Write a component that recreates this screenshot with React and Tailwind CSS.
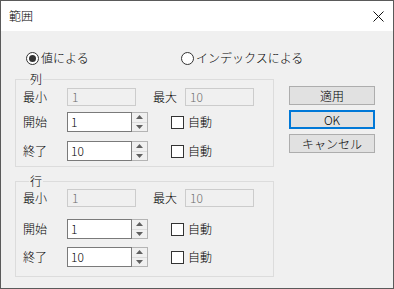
import React from 'react';

const font = { fontFamily: '"Noto Sans CJK JP", "Noto Sans", sans-serif' };

function Radio({ checked, label }) {
    return (
        <div className="flex items-center gap-[2px] whitespace-nowrap">
            <span className="shrink-0 w-[13px] h-[13px] rounded-full border border-[#333] bg-white flex items-center justify-center">
                {checked && <span className="w-[7px] h-[7px] rounded-full bg-[#333]" />}
            </span>
            <span className="text-[12px] leading-[14px] text-black">{label}</span>
        </div>
    );
}

function DisabledField({ value }) {
    return (
        <div className="w-[69px] h-[18px] border border-[#cccccc] bg-[#f0f0f0] px-[4px] flex items-center text-[12px] leading-[14px] text-[#6d6d6d]">
            {value}
        </div>
    );
}

function Spin({ value }) {
    return (
        <div className="flex w-[81px] h-[20px]">
            <div className="flex-1 border border-[#7a7a7a] bg-white px-[3px] flex items-center text-[12px] leading-[14px] text-black">{value}</div>
            <div className="w-[16px] border border-l-0 border-[#b4b4b4] bg-[#f0f0f0] flex flex-col">
                <div className="flex-1 flex items-center justify-center border-b border-[#dcdcdc]">
                    <svg width="7" height="4" viewBox="0 0 7 4"><path d="M3.5 0L7 4H0z" fill="#606060" /></svg>
                </div>
                <div className="flex-1 flex items-center justify-center">
                    <svg width="7" height="4" viewBox="0 0 7 4"><path d="M0 0h7L3.5 4z" fill="#606060" /></svg>
                </div>
            </div>
        </div>
    );
}

function Check({ label }) {
    return (
        <div className="flex items-center gap-[4px] whitespace-nowrap">
            <span className="shrink-0 w-[13px] h-[13px] border border-[#333] bg-white" />
            <span className="text-[12px] leading-[14px] text-black">{label}</span>
        </div>
    );
}

function Group({ title, rowGaps, padTop, padBottom }) {
    return (
        <fieldset className="border border-[#dcdcdc] px-[7px] min-w-0" style={{ paddingTop: padTop, paddingBottom: padBottom }}>
            <legend className="ml-[6px] px-[1px] text-[12px] leading-[14px] text-black">{title}</legend>
            <div className="flex items-center">
                <span className="w-[44px] text-[12px] leading-[14px]">最小</span>
                <DisabledField value="1" />
                <span className="ml-[17px] w-[32px] text-[12px] leading-[14px]">最大</span>
                <DisabledField value="10" />
            </div>
            <div className="flex items-center" style={{ marginTop: rowGaps[0] }}>
                <span className="w-[44px] text-[12px] leading-[14px]">開始</span>
                <Spin value="1" />
                <div className="ml-[23px]"><Check label="自動" /></div>
            </div>
            <div className="flex items-center" style={{ marginTop: rowGaps[1] }}>
                <span className="w-[44px] text-[12px] leading-[14px]">終了</span>
                <Spin value="10" />
                <div className="ml-[23px]"><Check label="自動" /></div>
            </div>
        </fieldset>
    );
}

function Button({ label, primary }) {
    return (
        <button
            className={
                primary
                    ? 'w-[86px] h-[19px] bg-[#e1e1e1] border-2 border-[#0078d7] text-[12px] leading-[14px] text-black'
                    : 'w-[86px] h-[19px] bg-[#e1e1e1] border border-[#adadad] text-[12px] leading-[14px] text-black'
            }
        >
            {label}
        </button>
    );
}

export default function App() {
    return (
        <div className="w-[394px] h-[289px] border border-[#5a5a5a] bg-[#f0f0f0] flex flex-col text-black font-light" style={font}>
            <div className="h-[30px] shrink-0 bg-white flex items-center justify-between pl-[8px] pr-[9px]">
                <span className="text-[12px] leading-[14px]">範囲</span>
                <svg width="11" height="11" viewBox="0 0 11 11">
                    <path d="M0.5 0.5L10.5 10.5M10.5 0.5L0.5 10.5" stroke="#111" strokeWidth="1" />
                </svg>
            </div>
            <div className="flex pl-[14px] pt-[20px]">
                <div className="w-[259px] flex flex-col">
                    <div className="flex pl-[11px]">
                        <div className="w-[155px] shrink-0"><Radio checked label="値による" /></div>
                        <Radio label="インデックスによる" />
                    </div>
                    <div className="mt-[7px]">
                        <Group title="列" rowGaps={[6, 9]} padTop={2} padBottom={5} />
                    </div>
                    <div className="mt-[7px]">
                        <Group title="行" rowGaps={[12, 8]} padTop={1} padBottom={9} />
                    </div>
                </div>
                <div className="ml-[15px] pt-[35px] flex flex-col gap-[5px]">
                    <Button label="適用" />
                    <Button label="OK" primary />
                    <Button label="キャンセル" />
                </div>
            </div>
        </div>
    );
}
